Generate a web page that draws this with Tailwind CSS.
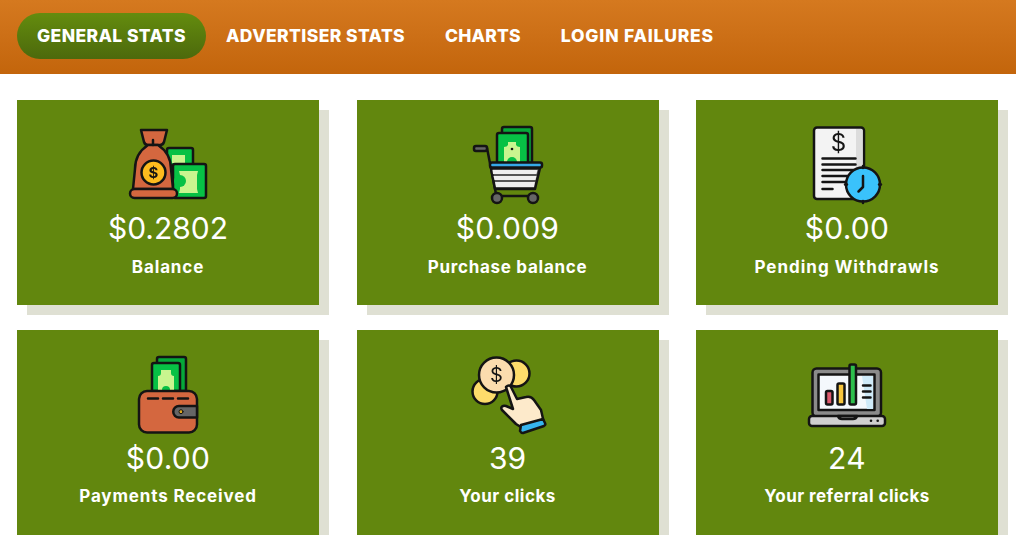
<!DOCTYPE html>
<html lang="en">
<head>
    <meta charset="UTF-8">
    <title>General stats</title>
    <meta name="viewport" content="width=device-width, initial-scale=1.0">
    <script src="https://cdn.jsdelivr.net/npm/@tailwindcss/browser@4"></script>
</head>
<body class="bg-white font-['Inter',sans-serif] overflow-hidden">
    <nav class="h-[74px] pl-[17px] pt-[13px] flex items-start bg-gradient-to-b from-[#d5791f] to-[#c3650b] text-white text-[17.5px] font-extrabold">
        <a class="h-[46px] px-5 flex items-center rounded-full bg-gradient-to-b from-[#648c0e] to-[#4c690c] tracking-[0.4px]">GENERAL STATS</a>
        <a class="h-[46px] px-5 flex items-center tracking-[0.4px]">ADVERTISER STATS</a>
        <a class="h-[46px] px-5 flex items-center tracking-[0.2px]">CHARTS</a>
        <a class="h-[46px] px-5 flex items-center tracking-[0.8px]">LOGIN FAILURES</a>
    </nav>

    <main class="w-[981px] ml-[17px] mt-[26px] grid grid-cols-[302px_302px_302px] gap-x-[37.5px] gap-y-[25px] text-white text-center">

        <div class="h-[205px] bg-[#62870e] shadow-[10px_10px_0_#dfe0d3] flex flex-col items-center pt-[15px]">
            <svg class="blur-[0.3px]" width="110" height="95" viewBox="113 115 110 95" stroke="#141414" stroke-width="2.5" stroke-linejoin="round" stroke-linecap="round">
                <rect x="167" y="148" width="26" height="24" rx="2" fill="#07c145"/>
                <path d="M172 155h13v8h-13z" fill="#c9f58f" stroke="none"/>
                <rect x="173" y="164" width="33" height="34" rx="2" fill="#07c145"/>
                <path d="M179 171h19l-1 4v14l1 4h-19l1-4v-14z" fill="#c9f58f" stroke="none"/>
                <circle cx="180" cy="181" r="6" fill="#07c145" stroke="none"/>
                <path d="M141 130h26l-3 12q-1 3-4 3h-12q-3 0-4-3z" fill="#d4673f"/>
                <path d="M148 145c-9 6-13 14-13 24l-2 20h40l-2-20c0-10-4-18-13-24z" fill="#d4673f"/>
                <rect x="130" y="189" width="47" height="9" rx="4.500" fill="#d4673f"/>
                <path d="M153 140v5" fill="none"/>
                <circle cx="153.500" cy="172.500" r="12" fill="#fdbb1e"/>
                <text x="153.500" y="178" text-anchor="middle" font-size="15" font-weight="700" fill="#141414" stroke="none" font-family="Inter, sans-serif">$</text>
            </svg>
            <div class="text-[30px] leading-9">$0.2802</div>
            <div class="mt-[9px] text-[17px] leading-6 font-bold tracking-[0.85px]">Balance</div>
        </div>

        <div class="h-[205px] bg-[#62870e] shadow-[10px_10px_0_#dfe0d3] flex flex-col items-center pt-[15px]">
            <svg class="blur-[0.3px]" width="110" height="95" viewBox="453 115 110 95" stroke="#141414" stroke-width="2.5" stroke-linejoin="round" stroke-linecap="round">
                <path d="M502 163v-34q0-2 2-2h26q2 0 2 2v34z" fill="#06a83a"/>
                <path d="M497 163v-28q0-2 2-2h27q2 0 2 2v28z" fill="#07c145"/>
                <path d="M504 162v-15q3 0 4-2v-3h8v3q1 2 4 2v15z" fill="#c9f58f" stroke="none"/>
                <path d="M507 162a5 5 0 0 1 10 0z" fill="#07c145" stroke="none"/>
                <circle cx="512" cy="149" r="1.300" fill="#141414" stroke="none"/>
                <path d="M487 148l9 46" fill="none"/>
                <rect x="474" y="146" width="13" height="5" rx="2" fill="#666"/>
                <path d="M491 168h49l-5 21h-40z" fill="#555"/>
                <path d="M492.500 170h45l-1 4h-43.500z" fill="#eee" stroke="none"/>
                <path d="M493.500 176h43l-1 4h-41z" fill="#eee" stroke="none"/>
                <path d="M495 182h40l-1 5h-38z" fill="#eee" stroke="none"/>
                <rect x="490" y="162.500" width="52" height="5" rx="2" fill="#36a9e8"/>
                <path d="M497 196h36" fill="none"/>
                <circle cx="497" cy="198" r="5" fill="#666"/>
                <circle cx="533" cy="198" r="5" fill="#666"/>
            </svg>
            <div class="text-[30px] leading-9 tracking-[0.3px]">$0.009</div>
            <div class="mt-[9px] text-[17px] leading-6 font-bold tracking-[0.72px]">Purchase balance</div>
        </div>

        <div class="h-[205px] bg-[#62870e] shadow-[10px_10px_0_#dfe0d3] flex flex-col items-center pt-[15px]">
            <svg class="blur-[0.3px]" width="110" height="95" viewBox="792 115 110 95" stroke="#141414" stroke-width="2.5" stroke-linejoin="round" stroke-linecap="round">
                <rect x="814" y="127.500" width="50" height="71.500" rx="3" fill="#f3f3f3"/>
                <path d="M856 129h5q1.500 0 1.500 1.500v40h-6.500z" fill="#dcdcdc" stroke="none"/>
                <text x="838.500" y="151" text-anchor="middle" font-size="24" font-weight="400" fill="#141414" stroke="none" font-family="Inter, sans-serif">$</text>
                <path d="M822.500 158.500h33M822.500 164.500h33M822.500 170h33M822.500 176h33M822.500 182h23" fill="none"/>
                <path d="M822.500 189h10" fill="none"/>
                <circle cx="863" cy="184.500" r="17" fill="#3ac2fb"/>
                <path d="M863 176v11l-4.500 4.500" fill="none"/>
                <path d="M863 166v2M863 201v2M845 184.500h2M879 184.500h2" fill="none"/>
            </svg>
            <div class="text-[30px] leading-9 tracking-[0.3px]">$0.00</div>
            <div class="mt-[9px] text-[17px] leading-6 font-bold tracking-[1px]">Pending Withdrawls</div>
        </div>

        <div class="h-[205px] bg-[#62870e] shadow-[10px_10px_0_#dfe0d3] flex flex-col items-center pt-[15px]">
            <svg class="blur-[0.3px]" width="110" height="95" viewBox="113 345 110 95" stroke="#141414" stroke-width="2.5" stroke-linejoin="round" stroke-linecap="round">
                <path d="M157 391v-32q0-2 2-2h25q2 0 2 2v32z" fill="#06a83a"/>
                <path d="M152 391v-26q0-2 2-2h24q2 0 2 2v26z" fill="#07c145"/>
                <path d="M158 390v-14q3 0 3-3v-3h10v3q0 3 3 3v14z" fill="#c9f58f" stroke="none"/>
                <path d="M162 390a4 4 0 0 1 8 0z" fill="#07c145" stroke="none"/>
                <rect x="139" y="391" width="58" height="41.500" rx="8" fill="#d4673f"/>
                <path d="M148 398.500h10M163 398.500h10M178 398.500h10" fill="none"/>
                <path d="M197 406h-18a5.500 5.500 0 0 0 0 11.500h18z" fill="#666"/>
                <circle cx="181" cy="411.700" r="2" fill="#e0a91e" stroke-width="1"/>
            </svg>
            <div class="text-[30px] leading-9 tracking-[0.3px]">$0.00</div>
            <div class="mt-[8px] text-[17px] leading-6 font-bold tracking-[0.85px]">Payments Received</div>
        </div>

        <div class="h-[205px] bg-[#62870e] shadow-[10px_10px_0_#dfe0d3] flex flex-col items-center pt-[15px]">
            <svg class="blur-[0.3px]" width="110" height="95" viewBox="453 345 110 95" stroke="#141414" stroke-width="2.5" stroke-linejoin="round" stroke-linecap="round">
                <circle cx="516.500" cy="373.500" r="13" fill="#fddc6b"/>
                <circle cx="485" cy="391.500" r="12.500" fill="#fddc6b"/>
                <circle cx="496.500" cy="375" r="17.500" fill="#fbdcae"/>
                <text x="496.500" y="382" text-anchor="middle" font-size="20" font-weight="400" fill="#141414" stroke="none" font-family="Inter, sans-serif">$</text>
                <path d="M506 387c2-2 4-2 5 0l6 12 9-2c4-1 6 0 8 3l7 10 3 13-20 6-8-5-14-14c-2-3 1-5 4-4l7 3z" fill="#fdeacb"/>
                <path d="M521 425l22-6 2 4q1 2-1 3l-21 7q-2 0-3-2z" fill="#36b5ee"/>
            </svg>
            <div class="text-[30px] leading-9">39</div>
            <div class="mt-[8px] text-[17px] leading-6 font-bold tracking-[0.5px]">Your clicks</div>
        </div>

        <div class="h-[205px] bg-[#62870e] shadow-[10px_10px_0_#dfe0d3] flex flex-col items-center pt-[15px]">
            <svg class="blur-[0.3px]" width="110" height="95" viewBox="792 345 110 95" stroke="#141414" stroke-width="2.5" stroke-linejoin="round" stroke-linecap="round">
                <rect x="812.500" y="368.500" width="68.500" height="48" rx="4" fill="#8b8b8b"/>
                <rect x="818.500" y="374.500" width="56" height="35.500" fill="#f4f8fc"/>
                <path d="M862 376h11v33h-6z" fill="#cfeaf8" stroke="none"/>
                <rect x="826" y="391" width="6.500" height="13.500" rx="1.500" fill="#de5a6e"/>
                <rect x="837.500" y="383.500" width="7" height="21" rx="1.500" fill="#f7c63e"/>
                <rect x="849.500" y="364.500" width="6.500" height="40" rx="1.500" fill="#2dbe4c"/>
                <path d="M863 385.500h7.500M863 391.500h7.500M863 397.500h7.500" fill="none"/>
                <rect x="809" y="416" width="76" height="10" rx="3" fill="#cfcfcf"/>
                <path d="M838 416q1 3 4 3h11q3 0 4-3z" fill="#999"/>
                <circle cx="871" cy="420.700" r="1.300" fill="#141414" stroke="none"/>
                <circle cx="877.700" cy="420.700" r="1.300" fill="#141414" stroke="none"/>
            </svg>
            <div class="text-[30px] leading-9 tracking-[0.3px]">24</div>
            <div class="mt-[8px] text-[17px] leading-6 font-bold tracking-[0.45px]">Your referral clicks</div>
        </div>

    </main>
</body>
</html>
